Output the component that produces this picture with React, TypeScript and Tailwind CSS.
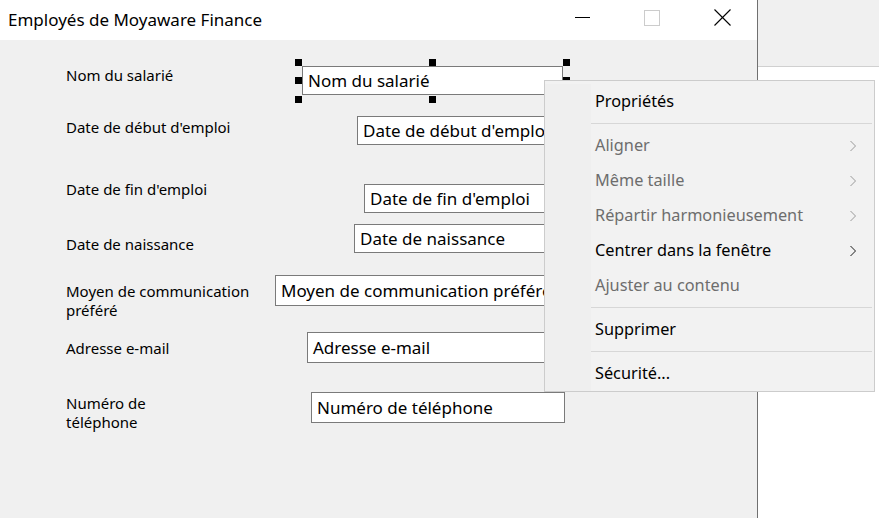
import React from "react";

const font = { fontFamily: '"Noto Sans", "Open Sans", sans-serif' };

type Item = { label: string; disabled?: boolean; sub?: boolean } | "sep";

const items: Item[] = [
  { label: "Propriétés" },
  "sep",
  { label: "Aligner", disabled: true, sub: true },
  { label: "Même taille", disabled: true, sub: true },
  { label: "Répartir harmonieusement", disabled: true, sub: true },
  { label: "Centrer dans la fenêtre", sub: true },
  { label: "Ajuster au contenu", disabled: true },
  "sep",
  { label: "Supprimer" },
  "sep",
  { label: "Sécurité..." },
];

const labels: { text: string[]; top: number }[] = [
  { text: ["Nom du salarié"], top: 26 },
  { text: ["Date de début d'emploi"], top: 78 },
  { text: ["Date de fin d'emploi"], top: 140 },
  { text: ["Date de naissance"], top: 195 },
  { text: ["Moyen de communication", "préféré"], top: 242 },
  { text: ["Adresse e-mail"], top: 299 },
  { text: ["Numéro de", "téléphone"], top: 354 },
];

const boxes: { text: string; left: number; top: number; w: number; h: number }[] = [
  { text: "Nom du salarié", left: 302, top: 26, w: 261, h: 29 },
  { text: "Date de début d'emploi", left: 357, top: 76, w: 256, h: 29 },
  { text: "Date de fin d'emploi", left: 364, top: 144, w: 256, h: 29 },
  { text: "Date de naissance", left: 354, top: 184, w: 256, h: 29 },
  { text: "Moyen de communication préféré", left: 275, top: 235, w: 300, h: 31 },
  { text: "Adresse e-mail", left: 307, top: 292, w: 256, h: 31 },
  { text: "Numéro de téléphone", left: 311, top: 352, w: 254, h: 31 },
];

const handles: [number, number][] = [
  [295, 19],
  [429, 19],
  [563, 19],
  [295, 37],
  [563, 37],
  [295, 56],
  [429, 56],
  [563, 56],
];

function Chevron({ color }: { color: string }) {
  return (
    <svg width="8" height="12" viewBox="0 0 8 12" className="mr-[17px]">
      <polyline points="1.5,1 6.5,6 1.5,11" fill="none" stroke={color} strokeWidth="1" />
    </svg>
  );
}

export default function App() {
  return (
    <div className="relative w-[879px] h-[518px] overflow-hidden bg-white flex text-black" style={font}>
      {/* Window */}
      <div className="w-[758px] h-full flex flex-col border-r border-[#707070]">
        <div className="h-[40px] bg-white flex items-center shrink-0">
          <div className="pl-[8px] text-[17px] leading-none flex-1 translate-y-[-1px]">Employés de Moyaware Finance</div>
          <div className="flex h-full">
            <div className="w-[70px] h-full flex items-center justify-center">
              <div className="w-[15px] h-px bg-black translate-y-[-3px]" />
            </div>
            <div className="w-[70px] h-full flex items-center justify-center">
              <div className="w-[16px] h-[16px] border border-[#cccccc] translate-y-[-2px]" />
            </div>
            <div className="w-[70px] h-full flex items-center justify-center">
              <svg width="17" height="17" viewBox="0 0 17 17" className="translate-y-[-3px]">
                <line x1="0.5" y1="0.5" x2="16.5" y2="16.5" stroke="#000" strokeWidth="1.1" />
                <line x1="16.5" y1="0.5" x2="0.5" y2="16.5" stroke="#000" strokeWidth="1.1" />
              </svg>
            </div>
          </div>
        </div>
        <div className="relative flex-1 bg-[#f0f0f0]">
          {labels.map((l, i) => (
            <div
              key={i}
              className="absolute left-[66px] text-[15px] leading-[19px]"
              style={{ top: l.top }}
            >
              {l.text.map((t, j) => (
                <div key={j}>{t}</div>
              ))}
            </div>
          ))}
          {boxes.map((b, i) => (
            <div
              key={i}
              className="absolute bg-white border border-[#7a7a7a] flex items-center pl-[5px] text-[17px] whitespace-nowrap overflow-hidden"
              style={{ left: b.left, top: b.top, width: b.w, height: b.h }}
            >
              {b.text}
            </div>
          ))}
          {handles.map(([x, y], i) => (
            <div key={i} className="absolute w-[7px] h-[7px] bg-black" style={{ left: x, top: y }} />
          ))}
        </div>
      </div>
      {/* Right side */}
      <div className="flex-1 flex flex-col">
        <div className="h-[67px] bg-[#f0f0f0] border-b border-[#d0d0d0]" />
        <div className="flex-1 bg-white" />
      </div>
      {/* Context menu */}
      <div className="absolute left-[544px] top-[80px] w-[331px] bg-[#f2f2f2] border border-[#cccccc] pt-[3px] flex">
        <div className="w-[46px] bg-[#efefef]" />
        <div className="flex-1 flex flex-col">
          {items.map((it, i) =>
            it === "sep" ? (
              <div key={i} className="h-[9px] flex items-center">
                <div className="w-full h-px bg-[#d7d7d7] mr-[2px]" />
              </div>
            ) : (
              <div key={i} className="h-[35px] flex items-center justify-between pl-[4px]">
                <span className={`text-[16.3px] ${it.disabled ? "text-[#6d6d6d]" : "text-black"}`}>{it.label}</span>
                {it.sub ? <Chevron color={it.disabled ? "#9a9a9a" : "#1a1a1a"} /> : null}
              </div>
            )
          )}
        </div>
      </div>
    </div>
  );
}
